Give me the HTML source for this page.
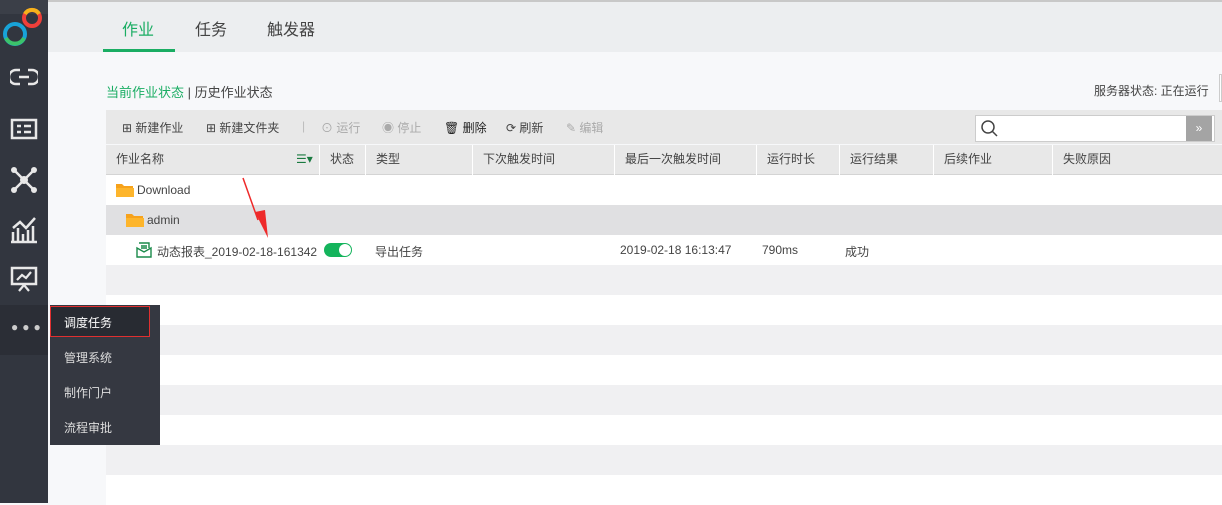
<!DOCTYPE html><html><head><meta charset="utf-8"><style>
*{margin:0;padding:0;box-sizing:border-box}
body{width:1222px;height:503px;overflow:hidden;background:#f7f8fa;font-family:"Liberation Sans","Noto Sans CJK SC",sans-serif;font-size:12px;color:#444;position:relative}
.abs{position:absolute}
.side{left:0;top:0;width:48px;height:503px;background:#32363f}
.top{left:48px;top:0;width:1174px;height:52px;background:#eceef0;border-top:2px solid #c8c8c8}
.tab{top:16px;font-size:16px;color:#444}
.row{left:106px;width:1116px;height:30px}
.hd{top:145px;left:106px;width:1116px;height:30px;background:#e8e8e8;border-bottom:1px solid #d4d4d4}
.col{position:absolute;top:0;height:30px;border-left:1px solid #fff;line-height:28px;padding-left:10px;color:#444}
.tb{top:110px;left:106px;width:1116px;height:34px;background:#e8e8e8}
.ti{position:absolute;top:9px;color:#444;font-size:12px}
.mi{position:absolute;left:64px;color:#ddd;font-size:12px}
svg{position:absolute}
</style></head><body>
<div class="abs side"></div>
<div class="abs" style="left:0;top:0;width:48px;height:14px;background:#3b3f48"></div>
<svg style="left:0;top:2px" width="48" height="48" viewBox="0 0 48 48"><circle cx="15" cy="32" r="10" fill="none" stroke="#18a3d8" stroke-width="4"/><path d="M6 36a10 10 0 0 0 18 0" fill="none" stroke="#3cc36a" stroke-width="4"/><circle cx="32" cy="16" r="8" fill="none" stroke="#ef3f3a" stroke-width="4"/><path d="M25 12a8 8 0 0 1 14 0" fill="none" stroke="#f6b21b" stroke-width="4"/></svg>
<svg style="left:10px;top:66px" width="28" height="22" viewBox="0 0 28 22"><path d="M10 4H6a5 5 0 0 0 0 14h4M18 4h4a5 5 0 0 1 0 14h-4M9 11h10" fill="none" stroke="#e8e8e8" stroke-width="2.5"/></svg>
<svg style="left:10px;top:118px" width="28" height="22" viewBox="0 0 28 22"><rect x="2" y="2" width="24" height="18" fill="none" stroke="#e8e8e8" stroke-width="2.5"/><path d="M7 8h4M14 8h7M7 14h4M14 14h7" stroke="#e8e8e8" stroke-width="2.5"/></svg>
<svg style="left:10px;top:166px" width="28" height="28" viewBox="0 0 28 28"><circle cx="14" cy="14" r="4" fill="#e8e8e8"/><g fill="#e8e8e8"><circle cx="4" cy="4" r="3"/><circle cx="24" cy="4" r="3"/><circle cx="4" cy="24" r="3"/><circle cx="24" cy="24" r="3"/></g><path d="M4 4L24 24M24 4L4 24" stroke="#e8e8e8" stroke-width="2.5"/></svg>
<svg style="left:9px;top:214px" width="30" height="30" viewBox="0 0 30 30"><path d="M2 28h26M4 28V18M9 28V14M14 28V20M19 28V16M24 28V12M4 14l7-6 6 6 9-10" fill="none" stroke="#e8e8e8" stroke-width="2.5"/></svg>
<svg style="left:10px;top:266px" width="28" height="26" viewBox="0 0 28 26"><rect x="2" y="2" width="24" height="16" fill="none" stroke="#e8e8e8" stroke-width="2.5"/><path d="M7 14l5-5 4 3 5-6M9 25l5-6 5 6" fill="none" stroke="#e8e8e8" stroke-width="2.2"/></svg>
<div class="abs" style="left:0;top:305px;width:48px;height:50px;background:#2b2e36"></div>
<div class="abs" style="left:11px;top:320px;color:#ccc;font-size:12px;letter-spacing:4px">●●●</div>
<div class="abs top"></div>
<div class="abs tab" style="left:122px;color:#1aad63">作业</div>
<div class="abs tab" style="left:195px">任务</div>
<div class="abs tab" style="left:267px">触发器</div>
<div class="abs" style="left:103px;top:49px;width:72px;height:3px;background:#1aad63"></div>
<div class="abs" style="left:106px;top:82px;font-size:13px"><span style="color:#1aad63">当前作业状态</span> | 历史作业状态</div>
<div class="abs" style="left:1094px;top:82px;font-size:12px">服务器状态: 正在运行</div>
<div class="abs" style="left:1219px;top:74px;width:3px;height:28px;border:1px solid #ccc;background:#fff"></div>
<div class="abs tb">
<span class="ti" style="left:16px">⊞ 新建作业</span>
<span class="ti" style="left:100px">⊞ 新建文件夹</span>
<span class="ti" style="left:196px;color:#bbb">|</span>
<span class="ti" style="left:215px;color:#aaa">⊙ 运行</span>
<span class="ti" style="left:276px;color:#aaa">◉ 停止</span>
<span class="ti" style="left:338px;color:#222">🗑 删除</span>
<span class="ti" style="left:400px">⟳ 刷新</span>
<span class="ti" style="left:460px;color:#aaa">✎ 编辑</span>
<div style="position:absolute;left:869px;top:5px;width:240px;height:27px;background:#fff;border:1px solid #ccc"></div>
<svg style="left:874px;top:9px" width="20" height="20" viewBox="0 0 20 20"><circle cx="8" cy="8" r="6" fill="none" stroke="#444" stroke-width="1.5"/><path d="M12.5 12.5L17 17" stroke="#444" stroke-width="1.5"/></svg>
<div style="position:absolute;left:1080px;top:6px;width:26px;height:25px;background:#a4a4a4;color:#fff;text-align:center;line-height:25px;font-size:12px">»</div>
</div>
<div class="abs hd">
<div class="col" style="left:0;border:0">作业名称</div>
<div class="abs" style="left:190px;top:7px;color:#1a7a40">☰▾</div>
<div class="col" style="left:213px">状态</div>
<div class="col" style="left:259px">类型</div>
<div class="col" style="left:366px">下次触发时间</div>
<div class="col" style="left:508px">最后一次触发时间</div>
<div class="col" style="left:650px">运行时长</div>
<div class="col" style="left:733px">运行结果</div>
<div class="col" style="left:827px">后续作业</div>
<div class="col" style="left:946px">失败原因</div>
</div>
<div class="abs row" style="top:175px;background:#fff"></div>
<div class="abs row" style="top:205px;background:#e0e0e2"></div>
<div class="abs row" style="top:235px;background:#fff"></div>
<div class="abs row" style="top:265px;background:#f0f0f2"></div>
<div class="abs row" style="top:295px;background:#fff"></div>
<div class="abs row" style="top:325px;background:#f0f0f2"></div>
<div class="abs row" style="top:355px;background:#fff"></div>
<div class="abs row" style="top:385px;background:#f0f0f2"></div>
<div class="abs row" style="top:415px;background:#fff"></div>
<div class="abs row" style="top:445px;background:#f0f0f2"></div>
<div class="abs row" style="top:475px;background:#fff"></div>
<svg style="left:116px;top:183px" width="18" height="14" viewBox="0 0 18 14"><path d="M0 1h6l2 2h9v11H0z" fill="#f7a21b"/><path d="M0 5h18v9H0z" fill="#fdb52c"/></svg>
<div class="abs" style="left:137px;top:183px">Download</div>
<svg style="left:126px;top:213px" width="18" height="14" viewBox="0 0 18 14"><path d="M0 1h6l2 2h9v11H0z" fill="#f7a21b"/><path d="M0 5h18v9H0z" fill="#fdb52c"/></svg>
<div class="abs" style="left:147px;top:213px">admin</div>
<svg style="left:136px;top:242px" width="16" height="16" viewBox="0 0 16 16"><path d="M3 1h10v5M1 6l7 4 7-4v9H1z M5 4h6M5 6h6" fill="none" stroke="#1a8a4a" stroke-width="1.4"/></svg>
<div class="abs" style="left:157px;top:243px">动态报表_2019-02-18-161342</div>
<div class="abs" style="left:324px;top:243px;width:28px;height:14px;border-radius:7px;background:#14b45c"></div>
<div class="abs" style="left:339px;top:244px;width:12px;height:12px;border-radius:6px;background:#fff"></div>
<div class="abs" style="left:375px;top:243px">导出任务</div>
<div class="abs" style="left:620px;top:243px">2019-02-18 16:13:47</div>
<div class="abs" style="left:762px;top:243px">790ms</div>
<div class="abs" style="left:845px;top:243px">成功</div>
<svg style="left:238px;top:176px" width="36" height="64" viewBox="0 0 36 64"><path d="M5 2L20 44" stroke="#ee2a2a" stroke-width="1.5"/><path d="M17 36L27 34L30 62z" fill="#ee2a2a"/></svg>
<div class="abs" style="left:50px;top:305px;width:110px;height:140px;background:#353841"></div>
<div class="abs" style="left:50px;top:306px;width:100px;height:31px;background:#282b32;border:1px solid #e03030"></div>
<div class="mi" style="top:314px;color:#fff">调度任务</div>
<div class="mi" style="top:349px">管理系统</div>
<div class="mi" style="top:384px">制作门户</div>
<div class="mi" style="top:419px">流程审批</div>
</body></html>
